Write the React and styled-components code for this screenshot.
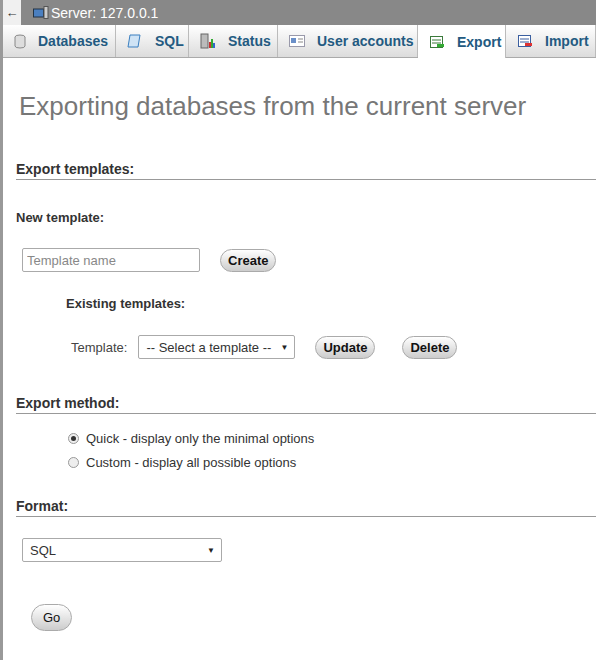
import React from 'react';
import styled, { createGlobalStyle } from 'styled-components';

const Global = createGlobalStyle`
  html, body { margin: 0; padding: 0; background: #fff; }
  body { font-family: Arial, "Liberation Sans", sans-serif; font-size: 13px; color: #444; }
`;

const Page = styled.div`
  width: 596px;
  height: 660px;
  border-left: 3px solid #999;
  box-sizing: border-box;
  overflow: hidden;
`;

const TopBar = styled.div`
  height: 25px;
  background: #888;
  display: flex;
  align-items: center;
  gap: 2px;
  color: #fff;
  font-size: 14px;
`;

const Back = styled.div`
  width: 18px;
  height: 25px;
  background: #f0f0f0;
  color: #333;
  display: flex;
  align-items: center;
  justify-content: center;
  font-size: 13px;
  margin-right: 10px;
`;

const Tabs = styled.div`
  height: 33px;
  display: flex;
  background: linear-gradient(#fff, #dcdcdc);
  border-bottom: 1px solid #aaa;
  box-sizing: border-box;
  white-space: nowrap;
`;

const Tab = styled.div`
  flex: 0 0 ${p => p.$w}px;
  box-sizing: border-box;
  display: flex;
  align-items: center;
  gap: 12px;
  padding: 0 0 0 11px;
  font-weight: bold;
  font-size: 14px;
  color: #235a81;
  border-right: 1px solid #bbb;
  background: ${p => (p.$active ? '#fff' : 'transparent')};
  margin-bottom: ${p => (p.$active ? '-1px' : '0')};
`;

const Content = styled.div`
  padding: 0 0 0 13px;
`;

const Title = styled.h2`
  font-weight: normal;
  font-size: 26px;
  color: #777;
  margin: 33px 0 0 3px;
  line-height: 30px;
`;

const Section = styled.div`
  font-weight: bold;
  font-size: 14px;
  color: #333;
  border-bottom: 1px solid #999;
  padding-bottom: 2px;
  margin-top: ${p => p.$top}px;
`;

const Sub = styled.div`
  font-weight: bold;
  font-size: 13px;
  color: #333;
  margin: ${p => p.$m};
`;

const Row = styled.div`
  display: flex;
  align-items: center;
  gap: ${p => p.$gap || 20}px;
  margin: ${p => p.$m};
`;

const Input = styled.input`
  width: 178px;
  height: 24px;
  box-sizing: border-box;
  border: 1px solid #aaa;
  border-radius: 2px;
  padding: 0 4px;
  font: 13px Arial, "Liberation Sans", sans-serif;
  &::placeholder { color: #888; }
`;

const Button = styled.button`
  height: 23px;
  padding: 0 7px;
  border: 1px solid #aaa;
  border-radius: 12px;
  background: linear-gradient(#fff, #ccc);
  font: bold 13px Arial, "Liberation Sans", sans-serif;
  color: #111;
`;

const GoButton = styled(Button)`
  height: 27px;
  padding: 0 11px;
  font-weight: normal;
  border-radius: 14px;
`;

const Select = styled.div`
  width: ${p => p.$w}px;
  height: 24px;
  box-sizing: border-box;
  border: 1px solid #aaa;
  border-radius: 2px;
  display: flex;
  align-items: center;
  justify-content: space-between;
  padding: 0 6px 0 7px;
  color: #333;
  font-size: 13px;
  &::after { content: '▼'; font-size: 8px; color: #222; }
`;

const Radio = styled.label`
  display: flex;
  align-items: center;
  gap: 7px;
  color: #333;
  margin-left: 52px;
  height: 24px;
`;

const Dot = styled.span`
  width: 11px;
  height: 11px;
  border-radius: 50%;
  border: 1px solid #999;
  background: #eee;
  box-sizing: border-box;
  display: flex;
  align-items: center;
  justify-content: center;
  &::after {
    content: '';
    width: 5px; height: 5px; border-radius: 50%;
    background: ${p => (p.$on ? '#333' : 'transparent')};
  }
`;

const Ico = ({ c1, c2 }) => (
  <svg width="16" height="16" viewBox="0 0 16 16">
    <rect x="1.5" y="2.5" width="12" height="11" fill="#fff" stroke={c1} />
    <path d="M3 6h9M3 9h9" stroke={c1} />
    <rect x="8" y="10" width="7" height="3" fill={c2} />
  </svg>
);

export default function App() {
  return (
    <Page>
      <Global />
      <TopBar>
        <Back>←</Back>
        <svg width="16" height="14" viewBox="0 0 16 14"><rect x="0.5" y="3" width="10" height="8" fill="#4a7fc0" stroke="#234" /><rect x="11" y="0.5" width="4" height="12" fill="#ccc" stroke="#555" /></svg>
        <span>Server: 127.0.0.1</span>
      </TopBar>
      <Tabs>
        <Tab $w={113}><svg width="12" height="15" viewBox="0 0 12 15"><ellipse cx="6" cy="3" rx="5" ry="2" fill="#ddd" stroke="#888" /><path d="M1 3v9a5 2 0 0 0 10 0V3" fill="#ddd" stroke="#888" /></svg>Databases</Tab>
        <Tab $w={73}><svg width="16" height="16" viewBox="0 0 16 16"><path d="M3 2h10l-2 12H1z" fill="#cfe3f5" stroke="#3a7fc0" /></svg>SQL</Tab>
        <Tab $w={89}><svg width="16" height="16" viewBox="0 0 16 16"><rect x="1" y="1" width="7" height="14" fill="#bbb" stroke="#666" /><rect x="9" y="9" width="2" height="6" fill="#c33" /><rect x="11" y="6" width="2" height="9" fill="#3a3" /><rect x="13" y="10" width="2" height="5" fill="#36c" /></svg>Status</Tab>
        <Tab $w={140}><svg width="16" height="12" viewBox="0 0 16 12"><rect x="0.5" y="0.5" width="15" height="11" fill="#fff" stroke="#99a" /><rect x="2" y="3" width="5" height="5" fill="#6a8fc8" /><path d="M9 4h5M9 7h5" stroke="#888" /></svg>User accounts</Tab>
        <Tab $w={88} $active><Ico c1="#3b7a3b" c2="#3a3" />Export</Tab>
        <Tab $w={90}><Ico c1="#3b5fa0" c2="#d33" />Import</Tab>
      </Tabs>
      <Content>
        <Title>Exporting databases from the current server</Title>
        <Section $top={40}>Export templates:</Section>
        <Sub $m="30px 0 0 0">New template:</Sub>
        <Row $m="23px 0 0 6px" $gap={20}>
          <Input placeholder="Template name" />
          <Button>Create</Button>
        </Row>
        <Sub $m="24px 0 0 50px">Existing templates:</Sub>
        <Row $m="24px 0 0 55px" $gap={11}>
          <span>Template:</span>
          <Select $w={157}>-- Select a template --</Select>
          <Button style={{ marginLeft: 9 }}>Update</Button>
          <Button style={{ marginLeft: 16 }}>Delete</Button>
        </Row>
        <Section $top={36}>Export method:</Section>
        <div style={{ marginTop: 12 }}>
          <Radio><Dot $on />Quick - display only the minimal options</Radio>
          <Radio><Dot />Custom - display all possible options</Radio>
        </div>
        <Section $top={24}>Format:</Section>
        <Row $m="21px 0 0 6px"><Select $w={200}>SQL</Select></Row>
        <Row $m="42px 0 0 15px"><GoButton>Go</GoButton></Row>
      </Content>
    </Page>
  );
}
